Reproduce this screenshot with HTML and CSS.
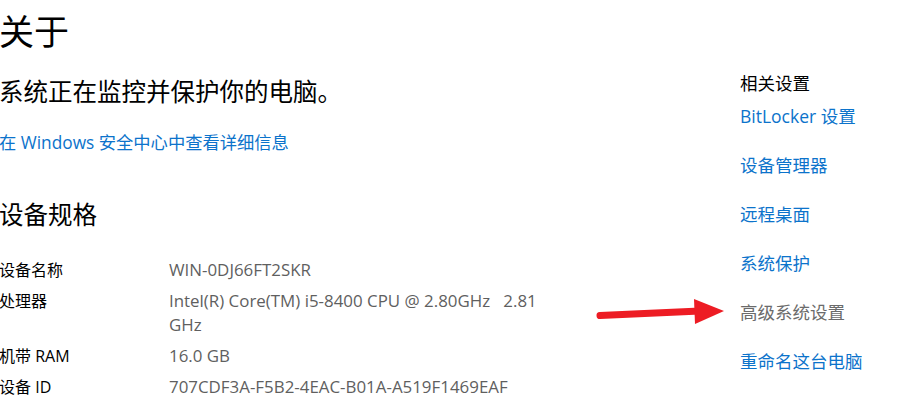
FILE: index.html
```html
<!DOCTYPE html>
<html lang="zh-CN">
<head>
<meta charset="utf-8">
<title>关于</title>
<link rel="stylesheet" href="styles.css">
</head>
<body>
<div class="page">
  <main class="main">
    <h1 class="title">关于</h1>
    <p class="status">系统正在监控并保护你的电脑。</p>
    <a class="link security" href="#">在 Windows 安全中心中查看详细信息</a>
    <h2 class="subtitle">设备规格</h2>
    <dl class="specs">
      <div class="row"><dt>设备名称</dt><dd>WIN-0DJ66FT2SKR</dd></div>
      <div class="row"><dt>处理器</dt><dd>Intel(R) Core(TM) i5-8400 CPU @ 2.80GHz&nbsp;&nbsp;&nbsp;2.81 GHz</dd></div>
      <div class="row"><dt>机带 RAM</dt><dd>16.0 GB</dd></div>
      <div class="row"><dt>设备 ID</dt><dd>707CDF3A-F5B2-4EAC-B01A-A519F1469EAF</dd></div>
    </dl>
  </main>
  <aside class="side">
    <h3 class="side-title">相关设置</h3>
    <nav class="side-links">
      <a class="link" href="#">BitLocker 设置</a>
      <a class="link" href="#">设备管理器</a>
      <a class="link" href="#">远程桌面</a>
      <a class="link" href="#">系统保护</a>
      <a class="link muted" href="#">高级系统设置</a>
      <a class="link" href="#">重命名这台电脑</a>
    </nav>
  </aside>
  <svg class="arrow" width="145" height="40" viewBox="0 0 145 40" aria-hidden="true">
    <line x1="12" y1="19.5" x2="112" y2="15" stroke="#ed1c24" stroke-width="7" stroke-linecap="round"/>
    <polygon points="106,3 136,15 107,28" fill="#ed1c24"/>
  </svg>
</div>
</body>
</html>
```
FILE: styles.css
```css
* { box-sizing: border-box; }
html, body { margin: 0; padding: 0; background: #fff; }
body {
  font-family: "Open Sans", "Noto Sans CJK SC", sans-serif;
  color: #000;
  width: 921px;
  height: 412px;
  overflow: hidden;
}
.page {
  position: relative;
  display: flex;
  height: 412px;
}
.main {
  flex: 1;
  display: flex;
  flex-direction: column;
  align-items: flex-start;
  margin-left: -1px;
}
.title {
  font-weight: 400;
  font-size: 35px;
  line-height: 48px;
  margin: 8px 0 0;
}
.status {
  font-size: 24.5px;
  line-height: 32px;
  margin: 20px 0 0;
}
.link {
  color: #0c73cb;
  text-decoration: none;
  font-size: 17.3px;
  line-height: 24px;
}
.security { margin-top: 23px; }
.subtitle {
  font-weight: 400;
  font-size: 24.5px;
  line-height: 32px;
  margin: 44px 0 0;
}
.specs {
  margin: 27px 0 0;
  display: flex;
  flex-direction: column;
  gap: 7px;
  font-size: 16px;
  line-height: 24px;
}
.row { display: flex; }
.row dt { width: 170px; flex: none; color: #000; }
.row dd { margin: 0; width: 382px; color: #5f5f5f; font-size: 16.9px; }
.side {
  width: 181px;
  flex: none;
  padding-top: 71px;
}
.side-title {
  font-weight: 400;
  font-size: 17.5px;
  line-height: 24px;
  margin: 0;
}
.side-links {
  margin-top: 9px;
  display: flex;
  flex-direction: column;
  align-items: flex-start;
  gap: 25px;
}
.side-links .link { font-size: 17.5px; }
.side-links .muted { color: #6b6b6b; }
.arrow {
  position: absolute;
  left: 588px;
  top: 296px;
}
```
